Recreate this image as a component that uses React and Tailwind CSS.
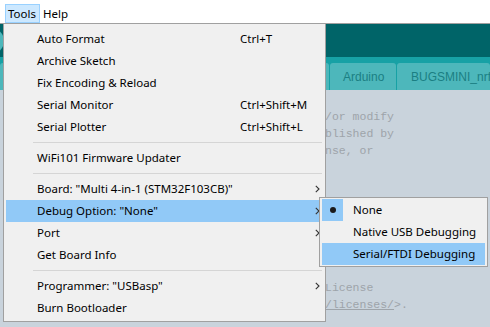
// Tools menu entries, top to bottom
const toolsItems = [
  { label: "Auto Format", shortcut: "Ctrl+T" },
  { label: "Archive Sketch" },
  { label: "Fix Encoding & Reload" },
  { label: "Serial Monitor", shortcut: "Ctrl+Shift+M" },
  { label: "Serial Plotter", shortcut: "Ctrl+Shift+L" },
  { sep: true },
  { label: "WiFi101 Firmware Updater" },
  { sep: true },
  { label: 'Board: "Multi 4-in-1 (STM32F103CB)"', sub: true },
  { label: 'Debug Option: "None"', sub: true, active: true },
  { label: "Port", sub: true },
  { label: "Get Board Info" },
  { sep: true },
  { label: 'Programmer: "USBasp"', sub: true },
  { label: "Burn Bootloader" },
];

// what is left visible of the license header, right of the menu
const codeLines = [
  "",
  "/or modify",
  "blished by",
  "nse, or",
  "",
  "",
  "",
  "",
  "",
  "",
  "",
  "License",
  null,
];

const Arrow = () => (
  <svg width="5" height="8" viewBox="0 0 5 8" className="ml-auto mr-[3px]">
    <path d="M0.8 0.8 L4 4 L0.8 7.2" fill="none" stroke="#333" strokeWidth="1.1" />
  </svg>
);

const MenuItem = ({ item }) => {
  if (item.sep) {
    return (
      <div className="h-[9px] flex items-center ml-[29px] mr-[3px]">
        <div className="h-px w-full bg-[#d5d5d5]" />
      </div>
    );
  }
  return (
    <div
      className={`mx-[2px] h-[22px] flex items-center pl-[31px] ${
        item.active ? "bg-[#91c9f7]" : ""
      }`}
    >
      <span className="w-[203px] whitespace-nowrap">{item.label}</span>
      {item.shortcut && <span className="whitespace-nowrap">{item.shortcut}</span>}
      {item.sub && <Arrow />}
    </div>
  );
};

export default function App() {
  return (
    <div className="relative w-[490px] h-[327px] overflow-hidden bg-[#c9d3dc] flex flex-col font-['Noto_Sans',sans-serif] text-[11.5px] text-black">
      {/* menu bar */}
      <div className="h-[24px] shrink-0 bg-white border-b border-[#a0a0a0] flex items-start pt-[4px] pl-[5px]">
        <div className="w-[35px] h-[19px] bg-[#cce8ff] border border-[#99d1ff] pl-[2px] flex items-center leading-none">
          Tools
        </div>
        <div className="h-[19px] pl-[3px] flex items-center leading-none">Help</div>
      </div>

      {/* toolbar */}
      <div className="h-[33px] shrink-0 bg-[#006468] flex items-center">
        <div className="w-[26px] h-[26px] rounded-full bg-[#4db7bb] ml-[-22px]" />
      </div>

      {/* tabs */}
      <div className="h-[33px] shrink-0 bg-[#17a1a5] pt-[6px] flex gap-[1px] font-['Liberation_Sans',Arial,sans-serif] text-[12px] text-[#1b7f83]">
        <div className="w-[329px] shrink-0 rounded-t-[3px] bg-[#4db7bb]" />
        <div className="w-[66px] shrink-0 rounded-t-[3px] bg-[#4db7bb] flex items-center px-[13px]">
          Arduino
        </div>
        <div className="flex-1 min-w-0 rounded-t-[3px] bg-[#4db7bb] flex items-center pl-[14px] whitespace-nowrap overflow-hidden">
          BUGSMINI_nrf
        </div>
      </div>

      {/* editor */}
      <div className="flex-1 pt-[1px] pl-[325px] font-['Liberation_Mono',monospace] text-[11.5px] leading-[17.1px] text-[#9ea4aa] whitespace-pre">
        {codeLines.map((line, i) =>
          line === null ? (
            <div key={i}>
              <span className="underline">/licenses/</span>
              {">."}
            </div>
          ) : (
            <div key={i}>{line || " "}</div>
          )
        )}
      </div>

      {/* Tools dropdown */}
      <div className="absolute left-[3px] top-[23px] w-[323px] bg-[#f0f0f0] border border-[#a0a0a0] pt-[4px] pb-[2px]">
        {toolsItems.map((item, i) => (
          <MenuItem key={i} item={item} />
        ))}
      </div>

      {/* Debug Option submenu */}
      <div className="absolute left-[319px] top-[197px] w-[169px] bg-[#f0f0f0] border border-[#a0a0a0] py-[1px]">
        <div className="mx-[2px] h-[22px] flex items-center">
          <div className="w-[21px] h-full bg-[#91c9f7] flex items-center justify-center">
            <div className="w-[6px] h-[6px] rounded-full bg-[#1a1a1a]" />
          </div>
          <span className="pl-[10px]">None</span>
        </div>
        <div className="mx-[2px] h-[22px] flex items-center pl-[31px]">Native USB Debugging</div>
        <div className="mx-[2px] h-[22px] flex items-center pl-[31px] bg-[#91c9f7]">
          Serial/FTDI Debugging
        </div>
      </div>
    </div>
  );
}
